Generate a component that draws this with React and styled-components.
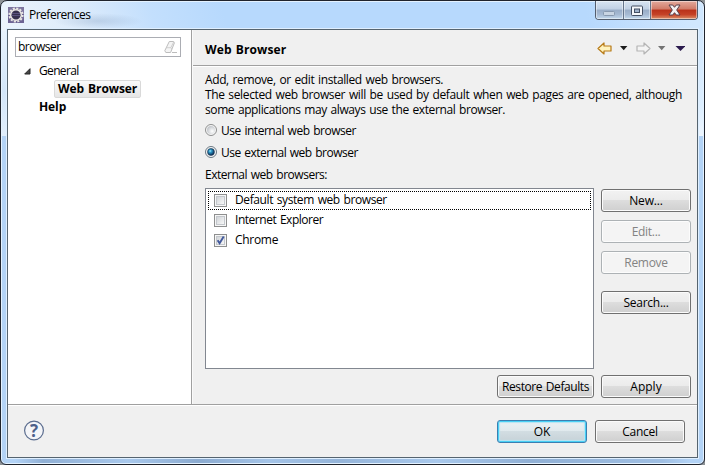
import React from "react";
import styled, { createGlobalStyle, css } from "styled-components";

const Global = createGlobalStyle`
  * { box-sizing: border-box; }
  body { margin: 0; background: #8d9296; overflow: hidden; }
`;

const WindowFrame = styled.div`
  width: 705px;
  height: 465px;
  display: flex;
  flex-direction: column;
  padding: 0 6px 6px;
  border: 1px solid #20242d;
  border-radius: 7px 7px 6px 6px;
  box-shadow: inset 0 0 0 1px #e4f2ff;
  background:
    linear-gradient(90deg, rgba(80, 110, 150, 0) 2%, rgba(80, 110, 150, 0.35) 6%, rgba(80, 110, 150, 0.1) 18%, rgba(80, 110, 150, 0.4) 28%, rgba(80, 110, 150, 0.15) 38%, rgba(80, 110, 150, 0.3) 48%, rgba(80, 110, 150, 0.1) 62%, rgba(80, 110, 150, 0.35) 75%, rgba(80, 110, 150, 0.2) 94%, transparent 98%) 0 458px / 100% 4px no-repeat,
    linear-gradient(180deg, #e8f2fc 0, #d3e6f9 60px, #e9f3fd 134px, transparent 135px) 0 30px / 7px 105px no-repeat,
    linear-gradient(180deg, #d3e8fd 0, #dceeff 75px, #eef6fe 105px) 697px 30px / 7px 105px no-repeat,
    radial-gradient(ellipse at center, rgba(90, 120, 160, 0.22), transparent 70%) 52px 12px / 90px 16px no-repeat,
    linear-gradient(75deg, #ecf4fc 0, #dcebfb 80px, #c3dffd 150px, #b7d9fd 220px, #b7d9fd 570px, #d0e7fe 670px) 0 0 / 100% 30px no-repeat,
    #b3d3f6;
  font: 12px/15px "Open Sans", "Noto Sans", sans-serif;
  color: #000;
`;

const TitleBar = styled.header`
  height: 28px;
  flex: none;
  display: flex;
  align-items: flex-start;
  justify-content: space-between;
  padding-left: 1px;
`;

const TitleGroup = styled.div`
  display: flex;
  gap: 5px;
  padding-top: 6px;
`;

const Label = styled.span`
  display: block;
  white-space: pre;
  word-spacing: 1px;
  letter-spacing: ${(p) => p.$track || 0}px;
  font-weight: ${(p) => (p.$bold ? 700 : 400)};
`;

const CaptionButtons = styled.div`
  display: flex;
  width: 103px;
  height: 19px;
  border: 1px solid #545e6e;
  border-top: 0;
  border-radius: 0 0 4px 4px;
  overflow: hidden;
`;

const CaptionButton = styled.button`
  flex: ${(p) => p.$w} 0 0;
  display: flex;
  align-items: center;
  justify-content: center;
  padding: 0;
  border: 0;
  border-right: ${(p) => (p.$close ? "0" : "1px solid #65758b")};
  box-shadow: inset 0 0 0 1px rgba(255, 255, 255, 0.45);
  background: ${(p) =>
    p.$close
      ? "linear-gradient(#e3aa9d 0, #d17b68 45%, #b9311a 50%, #c54227 75%, #dc8f68 100%)"
      : "linear-gradient(#d8e4f2 0, #c0d0e4 45%, #99adc7 50%, #a6bad3 75%, #c3d9ed 100%)"};
`;

const Client = styled.main`
  flex: 1;
  min-height: 0;
  display: flex;
  flex-direction: column;
  border: 1px solid #56646f;
  box-shadow: 0 0 0 1px #dfefff;
  background: #f0f0f0;
`;

const Panes = styled.div`
  flex: 1;
  min-height: 0;
  display: flex;
`;

const Sidebar = styled.nav`
  width: 184px;
  flex: none;
  padding: 7px 10px 0 7px;
  background: #fff;
  border-right: 1px solid #a0a0a0;
`;

const FilterField = styled.div`
  width: 166px;
  height: 20px;
  display: flex;
  justify-content: space-between;
  padding: 1px 2px 0 2px;
  border: 1px solid #abadb3;
`;

const TreeRow = styled.div`
  display: flex;
  align-items: center;
  height: 18px;
  padding-left: ${(p) => p.$indent}px;
`;

const Tree = styled.div`
  padding-top: 4px;
`;

const TreeArrow = styled.svg`
  width: 7px;
  height: 7px;
  margin: 2px 8px 0 0;
`;

const SelectedItem = styled.div`
  height: 18px;
  width: 87px;
  margin-top: 1px;
  padding: 0 0 0 3px;
  border: 1px solid #d9d9d9;
  border-radius: 2px;
  background: linear-gradient(#fafafa, #e6e6e6);
`;

const Page = styled.section`
  flex: 1;
  min-width: 0;
  display: flex;
  flex-direction: column;
  border-left: 1px solid #fafafa;
`;

const PageHeader = styled.div`
  height: 37px;
  flex: none;
  display: flex;
  justify-content: space-between;
  padding: 12px 12px 0 12px;
  border-bottom: 1px solid #fff;
  box-shadow: inset 0 -1px 0 #a0a0a0;
`;

const HistoryIcons = styled.svg`
  width: 88px;
  height: 14px;
`;

const PageBody = styled.div`
  flex: 1;
  display: flex;
  flex-direction: column;
  padding: 5px 6px 6px 12px;
`;

const Options = styled.div`
  display: flex;
  flex-direction: column;
  gap: 7px;
  padding: 6px 0 7px;
`;

const RadioRow = styled.label`
  display: flex;
  gap: 3px;
  height: 15px;
`;

const Glyph = styled.svg`
  width: 13px;
  height: 13px;
  flex: none;
  margin-top: ${(p) => p.$top || 0}px;
`;

const BrowserArea = styled.div`
  display: flex;
  gap: 7px;
  margin-top: 6px;
`;

const BrowserList = styled.div`
  width: 389px;
  height: 181px;
  padding: 2px;
  border: 1px solid #828790;
  background: #fff;
`;

const BrowserRow = styled.div`
  height: 20px;
  display: flex;
  gap: 8px;
  padding: 1px 6px 0;
`;

const FocusedRow = styled(BrowserRow)`
  height: 19px;
  margin-bottom: 1px;
  background:
    repeating-linear-gradient(90deg, #000 0 1px, transparent 1px 2px) 0 0 / 100% 1px no-repeat,
    repeating-linear-gradient(90deg, #000 0 1px, transparent 1px 2px) 0 100% / 100% 1px no-repeat,
    repeating-linear-gradient(180deg, #000 0 1px, transparent 1px 2px) 0 0 / 1px 100% no-repeat,
    repeating-linear-gradient(180deg, #000 0 1px, transparent 1px 2px) 100% 0 / 1px 100% no-repeat;
`;

const ButtonColumn = styled.div`
  display: flex;
  flex-direction: column;
  gap: 8px;
  padding-top: 1px;
`;

const Button = styled.button`
  width: ${(p) => p.$w || 90}px;
  height: 23px;
  flex: none;
  display: flex;
  justify-content: center;
  padding: 3px 0 0;
  margin-top: ${(p) => p.$top || 0}px;
  border: 1px solid #707070;
  border-radius: 3px;
  box-shadow: inset 0 0 0 1px #fbfbfb;
  background: linear-gradient(#f2f2f2 0, #ebebeb 48%, #dddddd 50%, #cfcfcf 100%);
  font: inherit;
  color: #000;
  ${(p) =>
    p.$primary &&
    css`
      border-color: #3c7fb1;
      box-shadow: inset 0 0 0 1px #48d0f5, inset 0 0 1px 2px #b5e4f3;
      background: linear-gradient(#eaf1f4 0, #e0e9ed 48%, #d2dde2 50%, #c6d1d7 100%);
    `}
  &:disabled {
    border-color: #adb2b5;
    box-shadow: inset 0 0 0 1px #fcfcfc;
    background: #f4f4f4;
    color: #838383;
  }
`;

const ApplyRow = styled.div`
  display: flex;
  gap: 7px;
  padding: 6px 0 0 292px;
`;

const Footer = styled.footer`
  height: 53px;
  flex: none;
  display: flex;
  justify-content: space-between;
  padding: 15px 12px 0 15px;
  border-top: 1px solid #a0a0a0;
  box-shadow: inset 0 1px 0 #fff;
`;

const FooterButtons = styled.div`
  display: flex;
  gap: 8px;
`;

const HelpMark = styled.svg`
  width: 22px;
  height: 22px;
  font: 700 17px "Open Sans", sans-serif;
`;

const GearIcon = () => (
  <svg width="16" height="16" viewBox="0 0 16 16">
    <rect width="16" height="16" fill="#6d6494" />
    <rect width="16" height="7" fill="#7d759f" />
    <circle cx="8" cy="8" r="6.6" fill="none" stroke="#e9e7e4" strokeWidth="2" strokeDasharray="2.1 1.356" />
    <circle cx="8" cy="8" r="5.3" fill="#35304e" stroke="#eae8e4" strokeWidth="1.5" />
    <path d="M4 6.5h8M3.7 8.5h8.6" stroke="#59527d" strokeWidth="1" />
  </svg>
);

const EraserIcon = () => (
  <svg width="15" height="16" viewBox="0 0 15 16">
    <path d="M6.3 2.5h4.2l.9 1.4-3.8 9.6H2.8l-1-1.8z" fill="#f4f4f4" stroke="#bdbdbd" />
    <path d="M3.4 8.7h4.4l1 1.4M7.8 8.7l3-6" fill="none" stroke="#c6c6c6" strokeWidth=".8" />
    <path d="M9 13.5h5" stroke="#bcbcbc" />
  </svg>
);

const Radio = ({ checked }) => (
  <Glyph viewBox="0 0 13 13" $top={1}>
    <defs>
      <radialGradient id="radioFace" cx=".65" cy=".65" r=".7">
        <stop offset="0" stopColor="#fff" />
        <stop offset="1" stopColor="#bfc3c8" />
      </radialGradient>
      <radialGradient id="radioDot" cx=".38" cy=".35" r=".65">
        <stop offset="0" stopColor="#9cecff" />
        <stop offset=".35" stopColor="#2b96c6" />
        <stop offset="1" stopColor="#0b2850" />
      </radialGradient>
    </defs>
    <circle cx="6" cy="6" r="5.5" fill="#f6f6f6" stroke={checked ? "#6b7883" : "#8e8f8f"} />
    <circle cx="6" cy="6" r="4" fill="url(#radioFace)" />
    {checked && <circle cx="6" cy="6" r="3.4" fill="url(#radioDot)" stroke="#173654" strokeWidth=".6" />}
  </Glyph>
);

const Checkbox = ({ checked }) => (
  <Glyph viewBox="0 0 13 13" $top={2}>
    <defs>
      <linearGradient id="boxFace" x1="0" y1="0" x2="1" y2="1">
        <stop offset="0" stopColor="#cfd2d6" />
        <stop offset="1" stopColor="#fafafa" />
      </linearGradient>
    </defs>
    <rect x=".5" y=".5" width="12" height="12" fill="#f6f6f6" stroke="#8e8f8f" />
    <rect x="2.5" y="2.5" width="8" height="8" fill="url(#boxFace)" stroke="#c3c7cc" />
    {checked && <path d="M3.6 6.2 5.6 9.3 9.7 2.6" fill="none" stroke="#42599c" strokeWidth="1.9" />}
  </Glyph>
);

const browsers = [
  { name: "Default system web browser", track: -0.4, focused: true },
  { name: "Internet Explorer", track: -0.47 },
  { name: "Chrome", track: -0.3 },
].map((b) => ({ ...b, checked: b.name === "Chrome" }));

export default function App() {
  return (
    <>
      <Global />
      <WindowFrame>
        <TitleBar>
          <TitleGroup>
            <GearIcon />
            <Label $track={-0.5}>Preferences</Label>
          </TitleGroup>
          <CaptionButtons>
            <CaptionButton $w={28} aria-label="Minimize">
              <svg width="13" height="15" viewBox="0 0 13 15">
                <rect x=".5" y="8.5" width="11" height="4" rx="1" fill="#c9d5e3" stroke="#8798ae" />
              </svg>
            </CaptionButton>
            <CaptionButton $w={27} aria-label="Maximize">
              <svg width="12" height="11" viewBox="0 0 12 11">
                <rect x=".5" y="1" width="11" height="9.5" rx="1" fill="#f5f7fa" stroke="#444f63" />
                <rect x="3.5" y="4" width="5" height="3.5" fill="#9fb1ca" stroke="#444f63" />
              </svg>
            </CaptionButton>
            <CaptionButton $w={47} $close aria-label="Close">
              <svg width="13" height="12" viewBox="0 0 13 12">
                <path
                  d="M1 1h3.7L6.5 3.3 8.3 1H12L8.7 6l3.3 5H8.3L6.5 8.7 4.7 11H1l3.3-5z"
                  fill="#f4f2f3"
                  stroke="#563f4b"
                  strokeLinejoin="round"
                />
              </svg>
            </CaptionButton>
          </CaptionButtons>
        </TitleBar>
        <Client>
          <Panes>
            <Sidebar>
              <FilterField>
                <Label $track={-0.5}>browser</Label>
                <EraserIcon />
              </FilterField>
              <Tree>
                <TreeRow $indent={9}>
                  <TreeArrow viewBox="0 0 7 7">
                    <path d="M6 .7V6H.7z" fill="#484848" stroke="#262626" />
                  </TreeArrow>
                  <Label $track={-0.65}>General</Label>
                </TreeRow>
                <TreeRow $indent={39}>
                  <SelectedItem>
                    <Label $bold $track={-0.08}>Web Browser</Label>
                  </SelectedItem>
                </TreeRow>
                <TreeRow $indent={24}>
                  <Label $bold $track={-0.1}>Help</Label>
                </TreeRow>
              </Tree>
            </Sidebar>
            <Page>
              <PageHeader>
                <Label $bold $track={0.1}>Web Browser</Label>
                <HistoryIcons viewBox="0 0 88 14">
                  <path d="M1 6.5 7 1v3h7v5H7v3z" fill="#fff3bd" stroke="#b77a16" strokeWidth="1.2" strokeLinejoin="round" />
                  <path d="M23 4h7.4l-3.7 4.2z" fill="#1c1c1c" />
                  <path d="M53 6.5 47 1v3h-7v5h7v3z" fill="#f4f4f4" stroke="#b4b4b4" strokeWidth="1.2" strokeLinejoin="round" />
                  <path d="M61 4h7.4l-3.7 4.2z" fill="#737373" />
                  <path d="M78.5 4h10l-5 5z" fill="#2b1b4d" />
                </HistoryIcons>
              </PageHeader>
              <PageBody>
                <Label $track={-0.385}>Add, remove, or edit installed web browsers.</Label>
                <Label $track={-0.365}>The selected web browser will be used by default when web pages are opened, although</Label>
                <Label $track={-0.4}>some applications may always use the external browser.</Label>
                <Options>
                  <RadioRow>
                    <Radio />
                    <Label $track={-0.48}>Use internal web browser</Label>
                  </RadioRow>
                  <RadioRow>
                    <Radio checked />
                    <Label $track={-0.51}>Use external web browser</Label>
                  </RadioRow>
                </Options>
                <Label $track={-0.48}>External web browsers:</Label>
                <BrowserArea>
                  <BrowserList>
                    {browsers.map((b) => {
                      const Row = b.focused ? FocusedRow : BrowserRow;
                      return (
                        <Row key={b.name}>
                          <Checkbox checked={b.checked} />
                          <Label $track={b.track}>{b.name}</Label>
                        </Row>
                      );
                    })}
                  </BrowserList>
                  <ButtonColumn>
                    <Button><Label $track={-0.15}>New...</Label></Button>
                    <Button disabled><Label $track={-0.3}>Edit...</Label></Button>
                    <Button disabled><Label $track={-0.3}>Remove</Label></Button>
                    <Button $top={9}><Label $track={-0.25}>Search...</Label></Button>
                  </ButtonColumn>
                </BrowserArea>
                <ApplyRow>
                  <Button $w={97}><Label $track={-0.42}>Restore Defaults</Label></Button>
                  <Button><Label>Apply</Label></Button>
                </ApplyRow>
              </PageBody>
            </Page>
          </Panes>
          <Footer>
            <HelpMark viewBox="0 0 22 22">
              <circle cx="11" cy="10.5" r="9.4" fill="#f4f5f8" stroke="#5a6c8e" strokeWidth="1.2" />
              <text x="11" y="16.6" textAnchor="middle" fill="#4c608a">?</text>
            </HelpMark>
            <FooterButtons>
              <Button $primary><Label>OK</Label></Button>
              <Button><Label $track={-0.3}>Cancel</Label></Button>
            </FooterButtons>
          </Footer>
        </Client>
      </WindowFrame>
    </>
  );
}
